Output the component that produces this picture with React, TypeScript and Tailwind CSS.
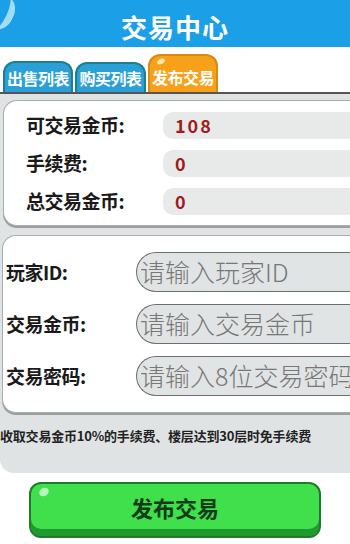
const cjk = { fontFamily: '"Noto Sans CJK SC", "Noto Sans", sans-serif' };

const tabBase =
  "flex items-center justify-center rounded-t-[12px] border-2 border-b-0 text-[16px] font-bold tracking-[-0.5px] text-white";

const infoRows = [
  { label: "可交易金币:", value: "108" },
  { label: "手续费:", value: "0" },
  { label: "总交易金币:", value: "0" },
];

const inputRows = [
  { label: "玩家ID:", placeholder: "请输入玩家ID" },
  { label: "交易金币:", placeholder: "请输入交易金币" },
  { label: "交易密码:", placeholder: "请输入8位交易密码" },
];

export default function App() {
  return (
    <div className="flex h-[544px] w-[350px] flex-col overflow-hidden bg-white" style={cjk}>
      <header className="relative flex h-[47px] shrink-0 items-center justify-center bg-[#1b9fe6]">
        <div className="absolute -left-[10px] -top-[4px] h-[34px] w-[24px] rotate-[25deg] rounded-[50%] border-r-[7px] border-[#9fdcf8]" />
        <h1 className="pt-[6px] text-[26px] font-bold tracking-[1px] text-white">交易中心</h1>
      </header>

      <nav className="flex h-[47px] shrink-0 items-end gap-[2px] border-b-2 border-[#555] pl-[3px]">
        <div className={`${tabBase} h-[31px] w-[70px] border-[#1d7f8c] bg-[#2ba0d8]`}>出售列表</div>
        <div className={`${tabBase} h-[30px] w-[71px] border-[#1d7f8c] bg-[#2ba0d8]`}>购买列表</div>
        <div className={`relative ${tabBase} h-[38px] w-[70px] border-[#d98a10] bg-[#f7a11a] pt-[6px]`}>
          <span className="absolute left-[7px] top-[3px] h-[5px] w-[8px] rotate-[-25deg] rounded-[50%] bg-[#fde7b0]" />
          发布交易
        </div>
      </nav>

      <section className="flex h-[379px] shrink-0 flex-col rounded-bl-[14px] bg-[#dfe3e3] pt-[6px]">
        <div className="ml-[3px] flex h-[126px] flex-col justify-center gap-[11px] rounded-l-[14px] border border-r-0 border-[#a9adad] bg-white pl-[22px] shadow-[0_2px_0_#9a9e9e]">
          {infoRows.map((row) => (
            <div key={row.label} className="flex h-[27px] items-center">
              <span className="w-[137px] text-[19px] font-bold tracking-[-0.5px] text-[#1a1a1a]">{row.label}</span>
              <div className="flex h-[27px] flex-1 items-center rounded-l-[10px] bg-[#e8eaea] pl-[12px] text-[18px] font-bold tracking-[2px] text-[#a01c1c]">
                {row.value}
              </div>
            </div>
          ))}
        </div>

        <div className="ml-[2px] mt-[9px] flex h-[178px] flex-col justify-center gap-[11px] rounded-l-[14px] border border-r-0 border-[#a9adad] bg-white pl-[3px] shadow-[0_2px_0_#9a9e9e]">
          {inputRows.map((row) => (
            <div key={row.label} className="flex h-[41px] items-center">
              <span className="w-[130px] text-[19px] font-bold tracking-[-0.5px] text-[#1a1a1a]">{row.label}</span>
              <div className="flex h-[40px] flex-1 items-center overflow-hidden whitespace-nowrap rounded-l-full border-[1.5px] border-r-0 border-[#6b6f6f] bg-[#e1e4e4] pl-[3px] text-[25px] font-light text-[#777]">
                {row.placeholder}
              </div>
            </div>
          ))}
        </div>

        <p className="mt-[13px] whitespace-nowrap text-[13px] font-bold tracking-[-0.2px] text-[#222]">
          收取交易金币10%的手续费、楼层达到30层时免手续费
        </p>
      </section>

      <div className="flex flex-1 items-start justify-center pt-[9px]">
        <button className="relative flex h-[56px] w-[292px] items-center justify-center rounded-[12px] border-2 border-[#1f7a2c] bg-[#3fe04b] pb-[5px] text-[22px] font-bold text-[#153a1c] shadow-[inset_0_-7px_0_#1f9a2e]">
          <span className="absolute left-[8px] top-[4px] h-[8px] w-[10px] rotate-[-30deg] rounded-[50%] bg-[#b8f5bd]" />
          发布交易
        </button>
      </div>
    </div>
  );
}
